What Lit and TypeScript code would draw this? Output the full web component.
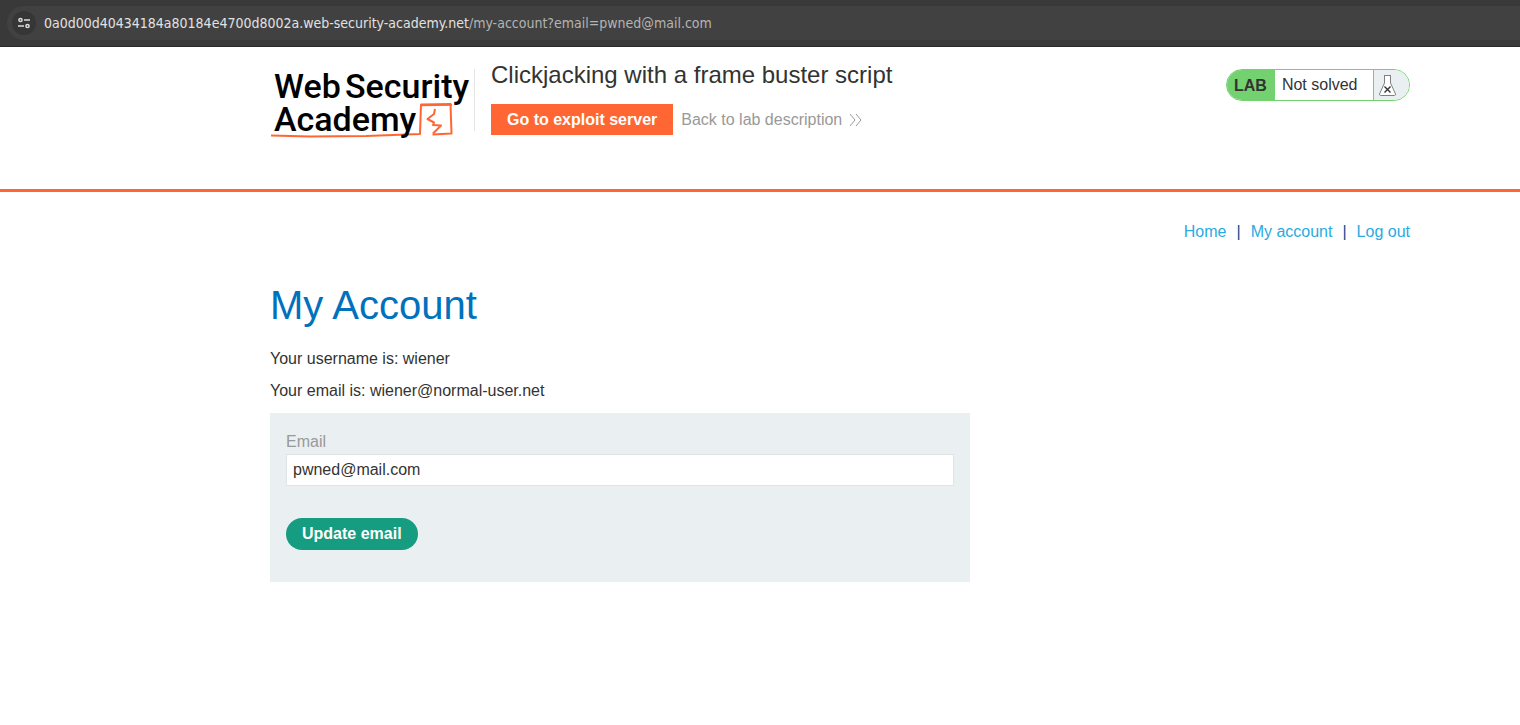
import { LitElement, html, css } from "lit";
import { customElement, property, state } from "lit/decorators.js";

@customElement("address-bar")
class AddressBar extends LitElement {
  @property() host = "";
  @property() path = "";

  static styles = css`
    :host {
      display: block;
      background: #393939;
      border-bottom: 1px solid #282828;
      padding: 6px 0 6px 7px;
    }
    .field {
      display: flex;
      align-items: center;
      gap: 8px;
      height: 34px;
      padding-left: 5px;
      border-radius: 17px 0 0 17px;
      background: #414141;
      font: 14px/20px "DejaVu Sans Condensed", "DejaVu Sans", sans-serif;
      color: #b4b4b4;
      white-space: nowrap;
    }
    .tune {
      display: flex;
      align-items: center;
      justify-content: center;
      width: 24px;
      height: 24px;
      padding: 0;
      border: 0;
      border-radius: 50%;
      background: #363636;
    }
    .host {
      color: #e2e2e2;
    }
  `;

  render() {
    return html`
      <div class="field">
        <button class="tune" aria-label="View site information">
          <svg width="14" height="14" viewBox="0 0 14 14" fill="none" stroke="#dcdcdc" stroke-width="1.5">
            <circle cx="3.5" cy="4" r="1.6" />
            <path d="M7 4h6M1 10h6" />
            <circle cx="10.5" cy="10" r="1.6" />
          </svg>
        </button>
        <div><span class="host">${this.host}</span>${this.path}</div>
      </div>
    `;
  }
}

@customElement("academy-logo")
class AcademyLogo extends LitElement {
  static styles = css`
    :host {
      display: block;
    }
    svg {
      display: block;
    }
    .word {
      font-family: Roboto, sans-serif;
      font-size: 34px;
      font-weight: 500;
      fill: #000;
    }
  `;

  render() {
    return html`
      <svg width="204" height="76" viewBox="0 0 204 76" role="img" aria-label="Web Security Academy">
        <g fill="none" stroke="#ff6633" stroke-linejoin="round">
          <path stroke-width="2" d="M1 72.500L40 73.500L96 73L150 71L151 41.500L180.500 41L181.500 70.500L162.500 71.500" />
          <path
            stroke-width="2"
            d="M165 46L164 51L157.500 56L164 59.500L163 62L171 62.500L163 70.500"
          />
          <path stroke-width="1.500" d="M151 42.500L182 42" />
        </g>
        <text class="word" x="4" y="35">Web</text>
        <text class="word" x="75" y="35">Security</text>
        <text class="word" x="4" y="68">Academy</text>
      </svg>
    `;
  }
}

@customElement("lab-status")
class LabStatus extends LitElement {
  static styles = css`
    :host {
      display: block;
    }
    .pill {
      display: flex;
      box-sizing: border-box;
      width: 184px;
      height: 32px;
      overflow: hidden;
      border: 1px solid #73d26f;
      border-radius: 16px;
      line-height: 30px;
      color: #333332;
    }
    .tag {
      padding: 1px 8px 0 7px;
      background: #73d26f;
      font-weight: 700;
    }
    .text {
      flex: 1;
      padding-left: 7px;
    }
    .flask {
      display: flex;
      align-items: center;
      width: 30px;
      padding-left: 5px;
      border-left: 1px solid #73d26f;
      background: #eaeff2;
    }
    .flask svg {
      flex: none;
    }
  `;

  render() {
    return html`
      <div class="pill">
        <span class="tag">LAB</span>
        <span class="text">Not solved</span>
        <span class="flask">
          <svg width="17" height="21" viewBox="0 0 17 21" fill="none">
            <path
              d="M5 .5h7M5.500 .5v7.500L.5 19q0 1.500 1 1.500h14q1 0 1-1.500L11.500 8V.5"
              fill="#fff"
              stroke="#808080"
            />
            <path d="M5.500 11.500l6 6M11.500 11.500l-6 6" stroke="#333" stroke-width="1.400" />
          </svg>
        </span>
      </div>
    `;
  }
}

@customElement("app-root")
class AppRoot extends LitElement {
  @state() private email = "pwned@mail.com";

  static styles = css`
    :host {
      display: block;
      min-height: 100vh;
      background: #fff;
      color: #333332;
      font: 16px/20px "Liberation Sans", Arial, sans-serif;
    }
    a {
      text-decoration: none;
    }
    .banner {
      display: flex;
      align-items: flex-start;
      box-sizing: border-box;
      min-height: 145px;
      padding: 14px 110px 24px 270px;
      border-bottom: 3px solid #ff6633;
    }
    .logo {
      margin-top: 2px;
    }
    .title {
      flex: 1;
      display: flex;
      align-items: flex-start;
      gap: 16px;
    }
    .rule {
      width: 1px;
      height: 62px;
      margin-top: 8px;
      background: #e5e5e5;
    }
    h2 {
      margin: 0 0 15px;
      font-size: 24px;
      line-height: 28px;
      font-weight: 400;
    }
    .actions {
      display: flex;
      align-items: center;
      gap: 8px;
    }
    .exploit {
      padding: 6px 16px 5px;
      background: #ff6633;
      color: #fff;
      font-weight: 700;
    }
    .back {
      display: flex;
      align-items: center;
      gap: 7px;
      color: #999;
    }
    .status {
      margin-top: 8px;
    }
    main {
      padding: 30px 110px 40px 270px;
    }
    nav {
      display: flex;
      justify-content: flex-end;
      gap: 10px;
      color: #0b4d8f;
    }
    nav a {
      color: #29abe2;
    }
    h1 {
      margin: 40px 0 21px;
      color: #0071bc;
      font-size: 40px;
      line-height: 46px;
      font-weight: 400;
    }
    p {
      margin: 0 0 12px;
    }
    form {
      display: flex;
      flex-direction: column;
      align-items: flex-start;
      box-sizing: border-box;
      max-width: 700px;
      padding: 19px 16px 32px;
      background: #eaeff2;
    }
    label {
      margin-bottom: 2px;
      color: #999;
    }
    input {
      box-sizing: border-box;
      width: 100%;
      height: 32px;
      margin: 0 0 32px;
      padding: 0 6px;
      border: 1px solid #e1e4e5;
      background: #fff;
      color: #333332;
      font: inherit;
    }
    .submit {
      height: 32px;
      padding: 0 16px;
      border: 0;
      border-radius: 16px;
      background: #169c80;
      color: #fff;
      font: inherit;
      font-weight: 700;
    }
  `;

  private onInput(e: Event) {
    this.email = (e.target as HTMLInputElement).value;
  }

  render() {
    return html`
      <address-bar
        host="0a0d00d40434184a80184e4700d8002a.web-security-academy.net"
        path="/my-account?email=pwned@mail.com"
      ></address-bar>
      <header class="banner">
        <academy-logo class="logo"></academy-logo>
        <div class="title">
          <div class="rule"></div>
          <div>
            <h2>Clickjacking with a frame buster script</h2>
            <div class="actions">
              <a class="exploit" href="#exploit">Go to exploit server</a>
              <a class="back" href="#description">
                Back to lab description
                <svg width="13" height="14" viewBox="0 0 13 14" fill="none" stroke="#999">
                  <path d="M1 1l5 6l-5 6M7 1l5 6l-5 6" />
                </svg>
              </a>
            </div>
          </div>
        </div>
        <lab-status class="status"></lab-status>
      </header>
      <main>
        <nav>
          <a href="#home">Home</a><span>|</span><a href="#account">My account</a><span>|</span
          ><a href="#logout">Log out</a>
        </nav>
        <h1>My Account</h1>
        <p>Your username is: wiener</p>
        <p>Your email is: wiener@normal-user.net</p>
        <form @submit=${(e: Event) => e.preventDefault()}>
          <label for="email">Email</label>
          <input id="email" type="email" .value=${this.email} @input=${this.onInput} />
          <button class="submit" type="submit">Update email</button>
        </form>
      </main>
    `;
  }
}
